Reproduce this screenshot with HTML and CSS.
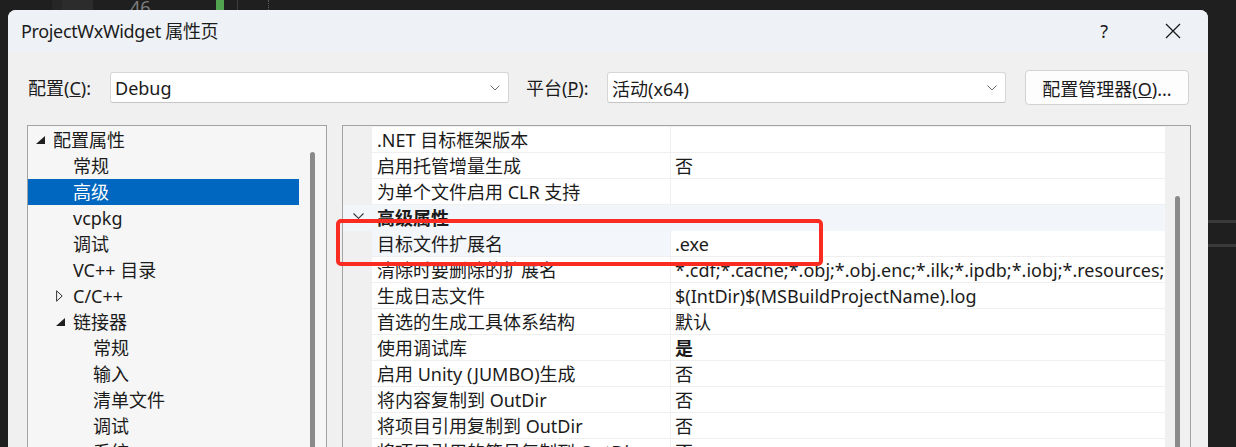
FILE: index.html
```html
<!DOCTYPE html>
<html lang="zh-CN">
<head>
<meta charset="utf-8">
<title>ProjectWxWidget 属性页</title>
<link rel="stylesheet" href="styles.css">
</head>
<body>
<div class="topstrip">
  <span class="ts-a"></span><span class="ts-b"></span><span class="ts-c"></span>
  <span class="ts-num">46</span>
  <span class="ts-green"></span><span class="ts-d"></span><span class="ts-line"></span><span class="ts-e"></span><span class="ts-dots"></span>
</div>
<div class="main">
  <div class="edge-left"></div>
  <div class="dialog">
    <div class="titlebar">
      <span class="title">ProjectWxWidget 属性页</span>
      <span class="help">?</span>
      <span class="close"><svg width="16" height="16" viewBox="0 0 16 16"><path d="M1 1 L15 15 M15 1 L1 15" stroke="#1a1a1a" stroke-width="1.3" fill="none"/></svg></span>
    </div>
    <div class="config">
      <span class="lbl lbl-config">配置(<u>C</u>):</span>
      <div class="combo"><span>Debug</span><svg class="chev" width="10" height="6" viewBox="0 0 10 6"><path d="M0.5 0.5 L5 5 L9.5 0.5" stroke="#6b6b6b" stroke-width="1" fill="none"/></svg></div>
      <span class="lbl lbl-platform">平台(<u>P</u>):</span>
      <div class="combo"><span>活动(x64)</span><svg class="chev" width="10" height="6" viewBox="0 0 10 6"><path d="M0.5 0.5 L5 5 L9.5 0.5" stroke="#6b6b6b" stroke-width="1" fill="none"/></svg></div>
      <button class="btn">配置管理器(<u>O</u>)...</button>
    </div>
    <div class="content">
      <div class="tree">
        <div class="tree-list">
          <div class="trow lv0"><span class="exp"><svg width="9" height="8" viewBox="0 0 9 8"><polygon points="9,0 9,8 0,8" fill="#1f1f1f"/></svg></span>配置属性</div>
          <div class="trow lv1"><span class="exp"></span>常规</div>
          <div class="trow lv1 sel"><span class="exp"></span>高级</div>
          <div class="trow lv1"><span class="exp"></span>vcpkg</div>
          <div class="trow lv1"><span class="exp"></span>调试</div>
          <div class="trow lv1"><span class="exp"></span>VC++ 目录</div>
          <div class="trow lv1"><span class="exp"><svg width="7" height="12" viewBox="0 0 7 12"><polygon points="0.6,0.8 6.2,6 0.6,11.2" fill="none" stroke="#333" stroke-width="1"/></svg></span>C/C++</div>
          <div class="trow lv1"><span class="exp"><svg width="9" height="8" viewBox="0 0 9 8"><polygon points="9,0 9,8 0,8" fill="#1f1f1f"/></svg></span>链接器</div>
          <div class="trow lv2"><span class="exp"></span>常规</div>
          <div class="trow lv2"><span class="exp"></span>输入</div>
          <div class="trow lv2"><span class="exp"></span>清单文件</div>
          <div class="trow lv2"><span class="exp"></span>调试</div>
          <div class="trow lv2"><span class="exp"></span>系统</div>
        </div>
        <div class="vscroll tree-scroll"><div class="thumb"></div></div>
      </div>
      <div class="grid">
        <div class="grid-body">
          <div class="grow"><span class="gut"></span><span class="name">.NET 目标框架版本</span><span class="val"></span></div>
          <div class="grow"><span class="gut"></span><span class="name">启用托管增量生成</span><span class="val">否</span></div>
          <div class="grow"><span class="gut"></span><span class="name">为单个文件启用 CLR 支持</span><span class="val"></span></div>
          <div class="ghead"><span class="gut"><svg width="11" height="6" viewBox="0 0 11 6"><path d="M0.5 0.5 L5.5 5.3 L10.5 0.5" stroke="#333" stroke-width="1.1" fill="none"/></svg></span><span class="hname">高级属性</span></div>
          <div class="grow active"><span class="gut"></span><span class="name">目标文件扩展名</span><span class="val">.exe</span></div>
          <div class="grow"><span class="gut"></span><span class="name">清除时要删除的扩展名</span><span class="val">*.cdf;*.cache;*.obj;*.obj.enc;*.ilk;*.ipdb;*.iobj;*.resources;*.tlb;*.tli;*.tlh;*.tmp;*.rsp;*.pgc;*.pgd;*.meta;*.tlog</span></div>
          <div class="grow"><span class="gut"></span><span class="name">生成日志文件</span><span class="val">$(IntDir)$(MSBuildProjectName).log</span></div>
          <div class="grow"><span class="gut"></span><span class="name">首选的生成工具体系结构</span><span class="val">默认</span></div>
          <div class="grow"><span class="gut"></span><span class="name">使用调试库</span><span class="val bold">是</span></div>
          <div class="grow"><span class="gut"></span><span class="name">启用 Unity (JUMBO)生成</span><span class="val">否</span></div>
          <div class="grow"><span class="gut"></span><span class="name">将内容复制到 OutDir</span><span class="val">否</span></div>
          <div class="grow"><span class="gut"></span><span class="name">将项目引用复制到 OutDir</span><span class="val">否</span></div>
          <div class="grow"><span class="gut"></span><span class="name">将项目引用的符号复制到 OutDir</span><span class="val">否</span></div>
        </div>
        <div class="vscroll grid-scroll"><div class="thumb"></div></div>
      </div>
    </div>
  </div>
  <div class="edge-right"><span class="rl rl1"></span><span class="rl rl2"></span></div>
</div>
<div class="annot"></div>
</body>
</html>
```

FILE: styles.css
```css
* { box-sizing: border-box; margin: 0; padding: 0; }
html, body { width: 1236px; height: 447px; overflow: hidden; }
body {
  background: #1f1f1f;
  font-family: "Noto Sans", "Noto Sans CJK SC", sans-serif;
  font-size: 18px;
  color: #1b1b1b;
  position: relative;
}

/* editor fragments above the dialog */
.topstrip { height: 10px; display: flex; overflow: hidden; }
.topstrip span { flex: none; height: 10px; }
.ts-a { width: 52px; }
.ts-b { width: 10px; background: #262626; }
.ts-c { width: 31px; background: #2c2c2c; }
.ts-num { width: 123px; padding-left: 37px; color: #7d7d7d; line-height: 24px; height: 24px !important; margin-top: -5px; }
.ts-green { width: 8px; background: #52a34f; }
.ts-d { width: 13px; }
.ts-line { width: 1px; background: #3d3d3d; }
.ts-e { width: 30px; }
.ts-dots { width: 1px; border-left: 1px dotted #5a5a5a; }

.main { display: flex; height: 437px; }
.edge-left { width: 8px; flex: none; }
.edge-right { flex: 1; display: flex; flex-direction: column; }
.rl { display: block; height: 3px; background: #3a3a3a; }
.rl1 { margin-top: 210px; }
.rl2 { margin-top: 21px; }

.dialog {
  width: 1200px; flex: none;
  background: #f0f0f0;
  border-radius: 8px 8px 0 0;
  overflow: hidden;
  display: flex; flex-direction: column;
}

.titlebar {
  height: 42px; flex: none;
  background: #eef2f7;
  display: flex; align-items: center;
  padding: 0 27px 0 13px;
}
.title { line-height: 1; letter-spacing: -0.35px; }
.help { margin-left: auto; margin-right: 57px; line-height: 1; color: #1a1a1a; }
.close { width: 16px; height: 16px; display: flex; }

.config {
  height: 53px; flex: none;
  display: flex; align-items: center;
  padding: 18px 0 0 20px;
}
.lbl { flex: none; line-height: 1; }
.lbl-config { width: 82px; }
.lbl-platform { width: 81px; margin-left: 17px; }
.combo {
  width: 399px; height: 31px; flex: none;
  background: #ffffff;
  border: 1px solid #d6d6d6;
  border-bottom-color: #c4c4c4;
  border-radius: 3px;
  display: flex; align-items: center; justify-content: space-between;
  padding: 0 8px 0 4px;
}
.chev { flex: none; }
.btn {
  width: 164px; height: 35px; flex: none;
  margin-left: 19px;
  background: #fdfdfd;
  border: 1px solid #d2d2d2;
  border-radius: 4px;
  font: inherit; color: inherit;
}

.content { flex: 1; min-height: 0; display: flex; gap: 15px; padding-left: 19px; margin-top: 20px; }

.tree {
  width: 300px; flex: none;
  border: 1px solid #a3a3a3; border-bottom: none;
  background: #f6f6f6;
  display: flex;
}
.tree-list { width: 271px; flex: none; padding-top: 1px; }
.trow { height: 26px; line-height: 26px; display: flex; align-items: center; white-space: nowrap; }
.trow.lv0 { padding-left: 8px; }
.trow.lv1 { padding-left: 28px; }
.trow.lv2 { padding-left: 48px; }
.exp { width: 17px; flex: none; display: flex; align-items: center; }
.trow.sel { background: #0067c0; color: #ffffff; }

.vscroll { flex: none; display: flex; flex-direction: column; }
.tree-scroll { width: 27px; padding: 26px 0 0 11px; }
.grid-scroll { width: 25px; padding: 70px 0 0 10px; }
.thumb { width: 5px; flex: 1; background: #8a8a8a; border-radius: 3px 3px 0 0; }

.grid {
  width: 849px; flex: none;
  border: 1px solid #a3a3a3; border-bottom: none;
  background: #f0f0f0;
  display: flex;
}
.grid-body { width: 822px; flex: none; padding-top: 1px; }
.grow { display: grid; grid-template-columns: 29px 299px 494px; height: 26px; }
.grow .name, .grow .val {
  background: #ffffff;
  border-bottom: 1px solid #efefef;
  padding-top: 1px;
  line-height: 24px; white-space: nowrap; overflow: hidden;
}
.grow .name { border-right: 1px solid #efefef; padding-left: 5px; }
.grow .val { padding-left: 4px; }
.grow.active .name { background: #f3f6fa; }
.val.bold { font-weight: 700; }
.ghead { display: grid; grid-template-columns: 29px 793px; height: 26px; background: #f2f5f9; }
.ghead .gut { display: flex; align-items: center; padding: 0 0 5px 10px; }
.hname { font-weight: 700; line-height: 26px; padding-left: 5px; }

.annot {
  position: absolute;
  left: 336px; top: 219px;
  width: 487px; height: 47px;
  border: 4px solid #fa2b20;
  border-radius: 5px;
}
```
